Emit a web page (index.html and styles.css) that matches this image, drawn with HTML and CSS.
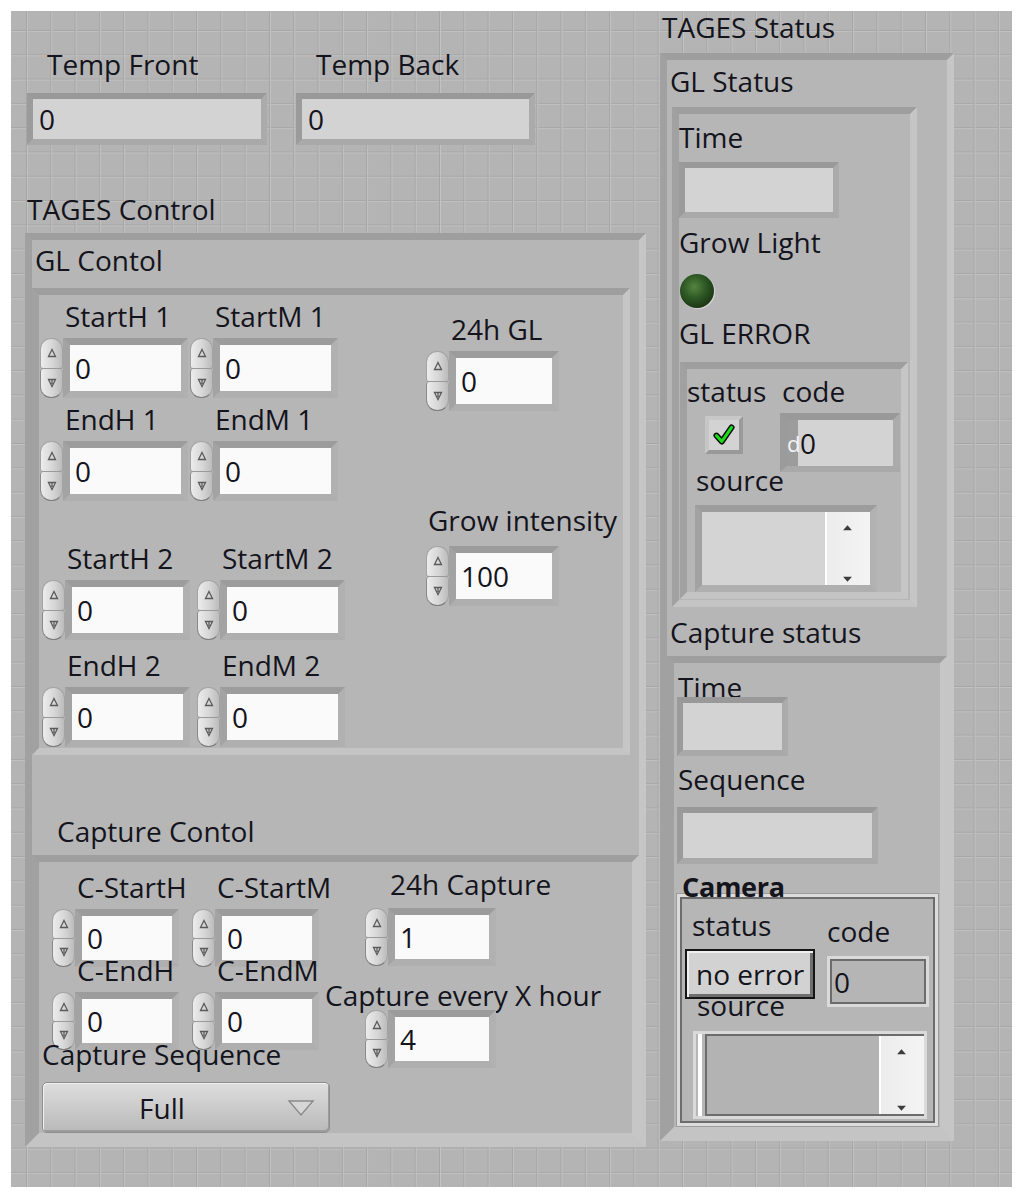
FILE: index.html
```html
<!DOCTYPE html>
<html>
<head>
<meta charset="utf-8">
<title>TAGES</title>
<link rel="stylesheet" href="styles.css">
</head>
<body>
<div class="panel">
  <div class="col-left">
    <div class="temps">
      <div class="ind-wrap">
        <div class="lbl temp-lbl">Temp Front</div>
        <div class="ind ind-temp">0</div>
      </div>
      <div class="ind-wrap">
        <div class="lbl temp-lbl">Temp Back</div>
        <div class="ind ind-temp ind-temp2">0</div>
      </div>
    </div>
    <div class="lbl tc-lbl">TAGES Control</div>
    <div class="cluster tc">
      <div class="lbl glc-lbl">GL Contol</div>
      <div class="cluster glc">
        <div class="glc-left">
          <div class="grp grp1">
            <div class="num"><div class="lbl num-lbl">StartH 1</div><div class="num-ctl"><div class="spin"><i class="sp sp-up"><svg viewBox="0 0 10 10"><path d="M5 1.5 L8.5 8.5 H1.5 Z"/></svg></i><i class="sp sp-dn"><svg viewBox="0 0 10 10"><path d="M1.5 1.5 H8.5 L5 8.5 Z M5 1.5 V6"/></svg></i></div><div class="field f-gl">0</div></div></div>
            <div class="num"><div class="lbl num-lbl">StartM 1</div><div class="num-ctl"><div class="spin"><i class="sp sp-up"><svg viewBox="0 0 10 10"><path d="M5 1.5 L8.5 8.5 H1.5 Z"/></svg></i><i class="sp sp-dn"><svg viewBox="0 0 10 10"><path d="M1.5 1.5 H8.5 L5 8.5 Z M5 1.5 V6"/></svg></i></div><div class="field f-gl">0</div></div></div>
            <div class="num"><div class="lbl num-lbl">EndH 1</div><div class="num-ctl"><div class="spin"><i class="sp sp-up"><svg viewBox="0 0 10 10"><path d="M5 1.5 L8.5 8.5 H1.5 Z"/></svg></i><i class="sp sp-dn"><svg viewBox="0 0 10 10"><path d="M1.5 1.5 H8.5 L5 8.5 Z M5 1.5 V6"/></svg></i></div><div class="field f-gl">0</div></div></div>
            <div class="num"><div class="lbl num-lbl">EndM 1</div><div class="num-ctl"><div class="spin"><i class="sp sp-up"><svg viewBox="0 0 10 10"><path d="M5 1.5 L8.5 8.5 H1.5 Z"/></svg></i><i class="sp sp-dn"><svg viewBox="0 0 10 10"><path d="M1.5 1.5 H8.5 L5 8.5 Z M5 1.5 V6"/></svg></i></div><div class="field f-gl">0</div></div></div>
          </div>
          <div class="grp grp2">
            <div class="num"><div class="lbl num-lbl">StartH 2</div><div class="num-ctl"><div class="spin"><i class="sp sp-up"><svg viewBox="0 0 10 10"><path d="M5 1.5 L8.5 8.5 H1.5 Z"/></svg></i><i class="sp sp-dn"><svg viewBox="0 0 10 10"><path d="M1.5 1.5 H8.5 L5 8.5 Z M5 1.5 V6"/></svg></i></div><div class="field f-gl">0</div></div></div>
            <div class="num"><div class="lbl num-lbl">StartM 2</div><div class="num-ctl"><div class="spin"><i class="sp sp-up"><svg viewBox="0 0 10 10"><path d="M5 1.5 L8.5 8.5 H1.5 Z"/></svg></i><i class="sp sp-dn"><svg viewBox="0 0 10 10"><path d="M1.5 1.5 H8.5 L5 8.5 Z M5 1.5 V6"/></svg></i></div><div class="field f-gl">0</div></div></div>
            <div class="num"><div class="lbl num-lbl">EndH 2</div><div class="num-ctl"><div class="spin"><i class="sp sp-up"><svg viewBox="0 0 10 10"><path d="M5 1.5 L8.5 8.5 H1.5 Z"/></svg></i><i class="sp sp-dn"><svg viewBox="0 0 10 10"><path d="M1.5 1.5 H8.5 L5 8.5 Z M5 1.5 V6"/></svg></i></div><div class="field f-gl">0</div></div></div>
            <div class="num"><div class="lbl num-lbl">EndM 2</div><div class="num-ctl"><div class="spin"><i class="sp sp-up"><svg viewBox="0 0 10 10"><path d="M5 1.5 L8.5 8.5 H1.5 Z"/></svg></i><i class="sp sp-dn"><svg viewBox="0 0 10 10"><path d="M1.5 1.5 H8.5 L5 8.5 Z M5 1.5 V6"/></svg></i></div><div class="field f-gl">0</div></div></div>
          </div>
        </div>
        <div class="glc-right">
          <div class="num"><div class="lbl num-lbl">24h GL</div><div class="num-ctl"><div class="spin"><i class="sp sp-up"><svg viewBox="0 0 10 10"><path d="M5 1.5 L8.5 8.5 H1.5 Z"/></svg></i><i class="sp sp-dn"><svg viewBox="0 0 10 10"><path d="M1.5 1.5 H8.5 L5 8.5 Z M5 1.5 V6"/></svg></i></div><div class="field f-24">0</div></div></div>
          <div class="num num-gi"><div class="lbl num-lbl lbl-gi">Grow intensity</div><div class="num-ctl"><div class="spin"><i class="sp sp-up"><svg viewBox="0 0 10 10"><path d="M5 1.5 L8.5 8.5 H1.5 Z"/></svg></i><i class="sp sp-dn"><svg viewBox="0 0 10 10"><path d="M1.5 1.5 H8.5 L5 8.5 Z M5 1.5 V6"/></svg></i></div><div class="field f-24">100</div></div></div>
        </div>
      </div>
      <div class="lbl cc-lbl">Capture Contol</div>
      <div class="cluster cc">
        <div class="cc-left">
          <div class="crow">
            <div class="num num-c1"><div class="lbl num-lbl">C-StartH</div><div class="num-ctl"><div class="spin"><i class="sp sp-up"><svg viewBox="0 0 10 10"><path d="M5 1.5 L8.5 8.5 H1.5 Z"/></svg></i><i class="sp sp-dn"><svg viewBox="0 0 10 10"><path d="M1.5 1.5 H8.5 L5 8.5 Z M5 1.5 V6"/></svg></i></div><div class="field f-c">0</div></div></div>
            <div class="num"><div class="lbl num-lbl">C-StartM</div><div class="num-ctl"><div class="spin"><i class="sp sp-up"><svg viewBox="0 0 10 10"><path d="M5 1.5 L8.5 8.5 H1.5 Z"/></svg></i><i class="sp sp-dn"><svg viewBox="0 0 10 10"><path d="M1.5 1.5 H8.5 L5 8.5 Z M5 1.5 V6"/></svg></i></div><div class="field f-c">0</div></div></div>
          </div>
          <div class="crow crow2">
            <div class="num num-c1"><div class="lbl num-lbl">C-EndH</div><div class="num-ctl"><div class="spin"><i class="sp sp-up"><svg viewBox="0 0 10 10"><path d="M5 1.5 L8.5 8.5 H1.5 Z"/></svg></i><i class="sp sp-dn"><svg viewBox="0 0 10 10"><path d="M1.5 1.5 H8.5 L5 8.5 Z M5 1.5 V6"/></svg></i></div><div class="field f-c">0</div></div></div>
            <div class="num"><div class="lbl num-lbl">C-EndM</div><div class="num-ctl"><div class="spin"><i class="sp sp-up"><svg viewBox="0 0 10 10"><path d="M5 1.5 L8.5 8.5 H1.5 Z"/></svg></i><i class="sp sp-dn"><svg viewBox="0 0 10 10"><path d="M1.5 1.5 H8.5 L5 8.5 Z M5 1.5 V6"/></svg></i></div><div class="field f-c">0</div></div></div>
          </div>
          <div class="lbl seq-lbl">Capture Sequence</div>
          <div class="ring"><span class="ring-txt">Full</span><svg class="ring-arrow" viewBox="0 0 28 20"><path d="M2 3 H26 L14 17 Z"/></svg></div>
        </div>
        <div class="cc-right">
          <div class="num num-24c"><div class="lbl num-lbl">24h Capture</div><div class="num-ctl"><div class="spin"><i class="sp sp-up"><svg viewBox="0 0 10 10"><path d="M5 1.5 L8.5 8.5 H1.5 Z"/></svg></i><i class="sp sp-dn"><svg viewBox="0 0 10 10"><path d="M1.5 1.5 H8.5 L5 8.5 Z M5 1.5 V6"/></svg></i></div><div class="field f-c24">1</div></div></div>
          <div class="num num-xh"><div class="lbl num-lbl lbl-xh">Capture every X hour</div><div class="num-ctl"><div class="spin"><i class="sp sp-up"><svg viewBox="0 0 10 10"><path d="M5 1.5 L8.5 8.5 H1.5 Z"/></svg></i><i class="sp sp-dn"><svg viewBox="0 0 10 10"><path d="M1.5 1.5 H8.5 L5 8.5 Z M5 1.5 V6"/></svg></i></div><div class="field f-c24">4</div></div></div>
        </div>
      </div>
    </div>
  </div>

  <div class="col-right">
    <div class="lbl ts-lbl">TAGES Status</div>
    <div class="cluster ts">
      <div class="lbl gls-lbl">GL Status</div>
      <div class="cluster gls">
        <div class="lbl">Time</div>
        <div class="ind ind-glt"></div>
        <div class="lbl gl-lbl">Grow Light</div>
        <div class="led"></div>
        <div class="lbl gle-lbl">GL ERROR</div>
        <div class="cluster gle">
          <div class="gle-row">
            <div class="gle-col1">
              <div class="lbl">status</div>
              <div class="chk"><svg viewBox="0 0 24 24"><path class="chk-o" d="M5 12.5 L10 18 L19 5"/><path class="chk-i" d="M5 12.5 L10 18 L19 5"/></svg></div>
            </div>
            <div class="gle-col2">
              <div class="lbl code-lbl">code</div>
              <div class="ind code-ind"><span class="radix">d</span><span class="code-val">0</span></div>
            </div>
          </div>
          <div class="lbl src-lbl">source</div>
          <div class="src">
            <div class="src-txt"></div>
            <div class="src-scroll"><svg viewBox="0 0 10 6"><path d="M1 5.5 L5 1 L9 5.5 Z"/></svg><svg viewBox="0 0 10 6"><path d="M1 0.5 L9 0.5 L5 5 Z"/></svg></div>
          </div>
        </div>
      </div>
      <div class="lbl cs-lbl">Capture status</div>
      <div class="cluster cs">
        <div class="lbl cs-time-lbl">Time</div>
        <div class="ind ind-cst"></div>
        <div class="lbl cs-seq-lbl">Sequence</div>
        <div class="ind ind-seq"></div>
        <div class="lbl cam-lbl">Camera</div>
        <div class="cam">
          <div class="cam-row">
            <div class="cam-col1">
              <div class="lbl cam-status-lbl">status</div>
              <div class="btn-noerr">no error</div>
            </div>
            <div class="cam-col2">
              <div class="lbl cam-code-lbl">code</div>
              <div class="cbox">0</div>
            </div>
          </div>
          <div class="lbl cam-src-lbl">source</div>
          <div class="csrc">
            <div class="csrc-strip"></div>
            <div class="csrc-txt"></div>
            <div class="csrc-scroll"><svg viewBox="0 0 10 6"><path d="M1 5.5 L5 1 L9 5.5 Z"/></svg><svg viewBox="0 0 10 6"><path d="M1 0.5 L9 0.5 L5 5 Z"/></svg></div>
          </div>
        </div>
      </div>
    </div>
  </div>
</div>
</body>
</html>
```

FILE: styles.css
```css
* { box-sizing: border-box; }

body {
  margin: 0;
  background: #ffffff;
  font-family: "Open Sans", "Noto Sans", sans-serif;
  color: #14141c;
}

.panel {
  margin: 11px 0 0 11px;
  width: 1001px;
  height: 1176px;
  display: flex;
  align-items: flex-start;
  padding: 1px 0 0 14px;
  background-color: #b4b4b4;
  background-image:
    linear-gradient(to right, #a6a6a6 0 1px, #c2c2c2 1px 2px, transparent 2px),
    linear-gradient(to bottom, #a6a6a6 0 1px, #c2c2c2 1px 2px, transparent 2px);
  background-size: 24.3px 24.3px;
  background-position: 15px 19px;
}

/* labels: 30px tall boxes, text line kept tight */
.lbl {
  font-size: 28px;
  line-height: 24px;
  padding-top: 3px;
  padding-bottom: 3px;
  white-space: nowrap;
}

/* ---------- indicators ---------- */
.ind {
  background: #d3d3d3;
  border: 6px solid;
  border-color: #999999 #ababab #a9a9a9 #9b9b9b;
  font-size: 28px;
  line-height: 26px;
  padding-left: 6px;
  display: flex;
  align-items: center;
}

/* ---------- clusters ---------- */
.cluster {
  background: #b6b6b6;
  border: 7px solid;
  border-color: #9e9e9e #c6c6c6 #c4c4c4 #a1a1a1;
  display: flex;
  flex-direction: column;
  align-items: flex-start;
}

/* ---------- left column ---------- */
.col-left {
  width: 621px;
  padding-top: 37px;
  display: flex;
  flex-direction: column;
  align-items: flex-start;
}

.temps {
  display: flex;
  gap: 29px;
  margin-left: 2px;
}

.ind-wrap {
  display: flex;
  flex-direction: column;
  align-items: flex-start;
}

.temp-lbl {
  padding-left: 20px;
  margin-bottom: 14px;
}

.ind-temp { width: 240px; height: 52px; }
.ind-temp2 { width: 239px; }

.tc-lbl { margin: 49px 0 0 2px; }

.tc {
  margin-top: 9px;
  width: 621px;
}

.glc-lbl { margin: 5px 0 0 3px; }

.glc {
  margin-top: 13px;
  width: 598px;
  flex-direction: row;
  padding: 6px 0 1px 0;
}

.glc-left {
  width: 387px;
  display: flex;
  flex-direction: column;
}

.grp {
  display: grid;
  align-items: start;
}

.grp1 {
  grid-template-columns: 150px auto;
  row-gap: 6px;
  padding-left: 1px;
}

.grp2 {
  grid-template-columns: 155px auto;
  row-gap: 10px;
  padding-left: 3px;
  margin-top: 42px;
}

.glc-right {
  padding-top: 13px;
  display: flex;
  flex-direction: column;
  align-items: flex-start;
}

.num {
  display: flex;
  flex-direction: column;
  align-items: flex-start;
}

.num-lbl {
  padding-left: 25px;
  margin-bottom: 7px;
}

.num-ctl { display: flex; }

.spin {
  width: 23px;
  display: flex;
  flex-direction: column;
}

.sp {
  flex: 1;
  display: flex;
  align-items: center;
  justify-content: center;
  background: linear-gradient(to right, #ececec, #d6d6d6 55%, #bcbcbc);
  border: 1px solid #a4a4a4;
}

.sp svg {
  width: 10px;
  height: 10px;
  fill: none;
  stroke: #5a5a5a;
  stroke-width: 1.3;
}

.sp-up {
  border-radius: 11px 11px 3px 3px;
  border-bottom-color: #9a9a9a;
}

.sp-dn {
  border-radius: 3px 3px 11px 11px;
  border-top: 0;
  border-bottom-color: #7a7a7a;
  border-left-color: #8a8a8a;
}

.field {
  background: #fafafa;
  border: 7px solid;
  border-color: #9c9c9c #b1b1b1 #afafaf #a3a3a3;
  font-size: 28px;
  line-height: 26px;
  padding-left: 5px;
  display: flex;
  align-items: center;
}

.f-gl { width: 125px; height: 60px; }
.f-24 { width: 110px; height: 60px; }
.f-c { width: 104px; height: 58px; }
.f-c24 { width: 108px; height: 58px; }

.num-gi { margin-top: 94px; }
.lbl-gi {
  padding-left: 2px;
  margin-bottom: 11px;
}

.cc-lbl {
  margin-top: 61px;
  padding-left: 25px;
}

.cc {
  margin-top: 9px;
  width: 607px;
  flex-direction: row;
  align-items: flex-start;
}

.cc-left {
  width: 326px;
  padding-top: 10px;
  display: flex;
  flex-direction: column;
  align-items: flex-start;
}

.crow {
  display: flex;
  align-items: flex-start;
  margin-left: 13px;
}

.crow2 { margin-top: -12px; }

.num-c1 { width: 140px; }

.seq-lbl {
  margin: -11px 0 0 3px;
}

.ring {
  margin: 13px 0 0 3px;
  width: 288px;
  height: 51px;
  display: flex;
  align-items: center;
  border: 1px solid #8e8e8e;
  border-radius: 5px;
  background: linear-gradient(to bottom, #dedede, #cdcdcd 45%, #b9b9b9);
  box-shadow: inset 1px 1px 0 #f0f0f0, inset -1px -2px 0 #9c9c9c;
}

.ring-txt {
  flex: 1;
  text-align: center;
  font-size: 28px;
  line-height: 30px;
  padding-right: 6px;
}

.ring-arrow {
  width: 28px;
  height: 20px;
  margin-right: 14px;
  fill: #d6d6d6;
  stroke: #8a8a8a;
  stroke-width: 1.4;
}

.cc-right {
  padding-top: 7px;
  display: flex;
  flex-direction: column;
  align-items: flex-start;
}

.num-24c .num-lbl { margin-bottom: 9px; }

.num-xh { margin-top: 14px; }

.lbl-xh {
  padding-left: 0;
  margin-left: -40px;
  margin-bottom: 0;
}

/* ---------- right column ---------- */
.col-right {
  margin-left: 14px;
  width: 294px;
  display: flex;
  flex-direction: column;
  align-items: flex-start;
}

.ts-lbl { margin-left: 2px; }

.ts {
  margin-top: 11px;
  width: 294px;
}

.gls-lbl { margin: 6px 0 0 3px; }

.gls {
  margin: 11px 0 0 5px;
  width: 245px;
  padding: 8px 0 1px 0;
}

.ind-glt {
  margin-top: 10px;
  width: 160px;
  height: 56px;
}

.gl-lbl { margin-top: 9px; }

.led {
  margin: 17px 0 0 1px;
  width: 34px;
  height: 34px;
  border-radius: 50%;
  background: radial-gradient(circle at 42% 38%, #55853f 0, #2f5a26 38%, #1b3614 75%, #132a0e 100%);
  box-shadow: 1px 1px 1px #d6d6d6;
}

.gle-lbl { margin-top: 10px; }

.gle {
  margin: 14px 0 0 1px;
  width: 228px;
  padding-top: 7px;
}

.gle-row {
  display: flex;
  align-items: flex-start;
}

.gle-col1 {
  width: 93px;
  display: flex;
  flex-direction: column;
  align-items: flex-start;
}

.chk {
  margin: 10px 0 0 18px;
  width: 38px;
  height: 38px;
  background: #d3d3d3;
  border: 4px solid;
  border-color: #c8c8c8 #9a9a9a #999999 #c6c6c6;
  display: flex;
  align-items: center;
  justify-content: center;
}

.chk svg {
  width: 26px;
  height: 26px;
  fill: none;
  stroke-linecap: round;
  stroke-linejoin: round;
}

.chk-o { stroke: #0c0c0c; stroke-width: 5.5; }
.chk-i { stroke: #16e016; stroke-width: 2.8; }

.gle-col2 {
  display: flex;
  flex-direction: column;
  align-items: flex-start;
}

.code-lbl { padding-left: 2px; }

.code-ind {
  margin-top: 7px;
  width: 120px;
  height: 59px;
  padding-left: 0;
  align-items: stretch;
  border-width: 7px 7px 6px 7px;
}

.radix {
  width: 11px;
  background: #9c9c9c;
  color: #f2f2f2;
  font-size: 22px;
  line-height: 46px;
  text-align: center;
}

.code-val {
  padding-left: 2px;
  display: flex;
  align-items: center;
}

.src-lbl {
  margin-top: -7px;
  padding-left: 9px;
}

.src {
  margin: 10px 0 0 8px;
  width: 182px;
  height: 87px;
  border: 7px solid;
  border-color: #9c9c9c #b2b2b2 #afafaf #a2a2a2;
  display: flex;
}

.src-txt {
  flex: 1;
  background: #d4d4d4;
}

.src-scroll,
.csrc-scroll {
  width: 45px;
  background: linear-gradient(to right, #ffffff 0 2px, #ececec 2px, #f4f4f4);
  display: flex;
  flex-direction: column;
  justify-content: space-between;
  align-items: center;
  padding: 12px 0 2px 0;
}

.src-scroll svg,
.csrc-scroll svg {
  width: 11px;
  height: 7px;
  fill: #3c3c3c;
}

.cs-lbl { margin: 10px 0 0 3px; }

.cs {
  margin-top: 9px;
  width: 280px;
  padding: 9px 0 1px 0;
}

.cs-time-lbl { padding-left: 4px; }

.ind-cst {
  margin: -5px 0 0 3px;
  width: 111px;
  height: 59px;
}

.cs-seq-lbl {
  margin-top: 8px;
  padding-left: 4px;
}

.ind-seq {
  margin: 13px 0 0 3px;
  width: 201px;
  height: 57px;
}

.cam-lbl {
  position: relative;
  z-index: 1;
  margin-top: 8px;
  padding-left: 8px;
  font-weight: 700;
  font-size: 27px;
  letter-spacing: -0.3px;
}

.cam {
  margin: -8px 0 0 3px;
  width: 261px;
  border: 3px solid #dcdcdc;
  box-shadow: 0 0 0 1px #9c9c9c, inset 0 0 0 2px #6c6c6c;
  padding-bottom: 4px;
  display: flex;
  flex-direction: column;
  align-items: flex-start;
}

.cam-row {
  display: flex;
  align-items: flex-start;
  padding-top: 13px;
}

.cam-col1 {
  width: 147px;
  display: flex;
  flex-direction: column;
  align-items: flex-start;
}

.cam-status-lbl { padding-left: 12px; }

.btn-noerr {
  margin: 9px 0 0 5px;
  width: 130px;
  height: 50px;
  border: 2px solid #161616;
  background: #d2d2d2;
  box-shadow: inset 2px 2px 0 #f0f0f0, inset -3px -3px 0 #6f6f6f;
  font-size: 28px;
  line-height: 26px;
  padding-left: 9px;
  display: flex;
  align-items: center;
}

.cam-col2 {
  display: flex;
  flex-direction: column;
  align-items: flex-start;
}

.cam-code-lbl { margin-top: 6px; }

.cbox {
  margin-top: 10px;
  width: 102px;
  height: 51px;
  border: 3px solid #dadada;
  box-shadow: inset 0 0 0 2px #6c6c6c;
  background: #b5b5b5;
  font-size: 28px;
  line-height: 26px;
  padding-left: 4px;
  display: flex;
  align-items: center;
}

.cam-src-lbl {
  margin-top: -17px;
  padding-left: 17px;
}

.csrc {
  margin: 11px 0 0 13px;
  width: 234px;
  height: 88px;
  border: 3px solid #dadada;
  display: flex;
}

.csrc-strip {
  width: 4px;
  margin-left: 2px;
  background: #ffffff;
}

.csrc-txt {
  flex: 1;
  margin-left: 3px;
  background: #b3b3b3;
  border: 2px solid #6c6c6c;
  border-right: 0;
}

.csrc-scroll {
  border-top: 2px solid #6c6c6c;
  border-bottom: 2px solid #6c6c6c;
}
```
